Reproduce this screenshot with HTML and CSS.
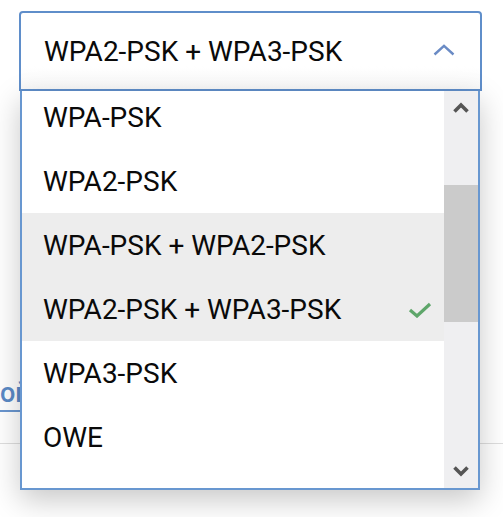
FILE: index.html
```html
<!DOCTYPE html>
<html lang="ru">
<head>
  <meta charset="UTF-8" />
  <meta name="viewport" content="width=device-width, initial-scale=1.0"/>
  <title>Безопасность</title>
  <link rel="stylesheet" href="styles.css">
</head>
<body>
  <div class="page">
    <div class="select-wrap">
      <div class="select">
        <span class="select-value">WPA2-PSK + WPA3-PSK</span>
        <svg class="chevron" width="22" height="12" viewBox="0 0 22 12">
          <path d="M1.5 10.5 L11 1.8 L20.5 10.5" fill="none" stroke="#6a8bc5" stroke-width="2.4"/>
        </svg>
      </div>

      <!-- open dropdown -->
      <div class="dropdown">
        <div class="options">
          <div class="option">WPA-PSK</div>
          <div class="option">WPA2-PSK</div>
          <div class="option hover">WPA-PSK + WPA2-PSK</div>
          <div class="option selected">
            <span>WPA2-PSK + WPA3-PSK</span>
            <svg width="24" height="16" viewBox="0 0 24 16">
              <path d="M2 8 L9 14 L22 2" fill="none" stroke="#5ea66a" stroke-width="3.2"/>
            </svg>
          </div>
          <div class="option">WPA3-PSK</div>
          <div class="option">OWE</div>
        </div>
        <div class="scrollbar">
          <svg class="arrow" width="18" height="14" viewBox="0 0 18 14">
            <path d="M2.5 10.5 L9 4 L15.5 10.5" fill="none" stroke="#555" stroke-width="3.6"/>
          </svg>
          <div class="track"><div class="thumb"></div></div>
          <svg class="arrow" width="18" height="14" viewBox="0 0 18 14">
            <path d="M2.5 3.5 L9 10 L15.5 3.5" fill="none" stroke="#555" stroke-width="3.6"/>
          </svg>
        </div>
      </div>
    </div>

    <div class="form-row">
      <a class="link" href="#">ой</a>
    </div>
    <div class="divider"></div>
  </div>
</body>
</html>
```

FILE: styles.css
```css
body {
  margin: 0;
  background: #fff;
  font-family: Roboto, "Liberation Sans", sans-serif;
  color: #0a0a0a;
}

.page {
  padding-top: 11px;
  height: 517px;
  box-sizing: border-box;
  overflow: hidden;
}

.select-wrap {
  position: relative;
  margin-left: 19px;
  width: 463px;
  z-index: 2;
}

.select {
  height: 80px;
  box-sizing: border-box;
  border: 2px solid #5f8eca;
  border-radius: 4px 4px 0 0;
  background: linear-gradient(#fff 70%, #f9f9f9);
  display: flex;
  align-items: center;
  justify-content: space-between;
  padding: 0 25px 0 23px;
  font-size: 28px;
}

.chevron {
  margin-top: -2px;
}

/* Dropdown list */
.dropdown {
  position: absolute;
  top: 80px;
  left: 1px;
  width: 460px;
  height: 399px;
  box-sizing: border-box;
  border: 2px solid #6897d0;
  border-top: none;
  background: #fff;
  display: flex;
  overflow: hidden;
  box-shadow: 0 10px 28px rgba(0, 0, 0, 0.22);
}

.options {
  flex: 1;
  margin-top: -6px;
}

.option {
  height: 64px;
  display: flex;
  align-items: center;
  justify-content: space-between;
  padding: 0 12px 0 21px;
  font-size: 28px;
  color: #0a0a0a;
}

.option.hover,
.option.selected {
  background: #ededed;
}

.option.selected svg {
  margin-top: 2px;
}

.scrollbar {
  width: 34px;
  background: #efeff1;
  display: flex;
  flex-direction: column;
  align-items: center;
}

.arrow {
  margin: 10px 0;
}

.track {
  flex: 1;
  width: 100%;
  position: relative;
}

.thumb {
  margin-top: 60px;
  height: 137px;
  background: #cbcbcb;
}

/* Content behind the dropdown */
.form-row {
  height: 321px;
  display: flex;
  align-items: flex-end;
}

.link {
  font-size: 27px;
  font-weight: 500;
  color: #5b8ac6;
  text-decoration: none;
  border-bottom: 2px solid #6a96cf;
  line-height: 30px;
  padding-bottom: 2px;
}

.divider {
  margin-top: 31px;
  border-top: 1px solid #dedede;
}
```
